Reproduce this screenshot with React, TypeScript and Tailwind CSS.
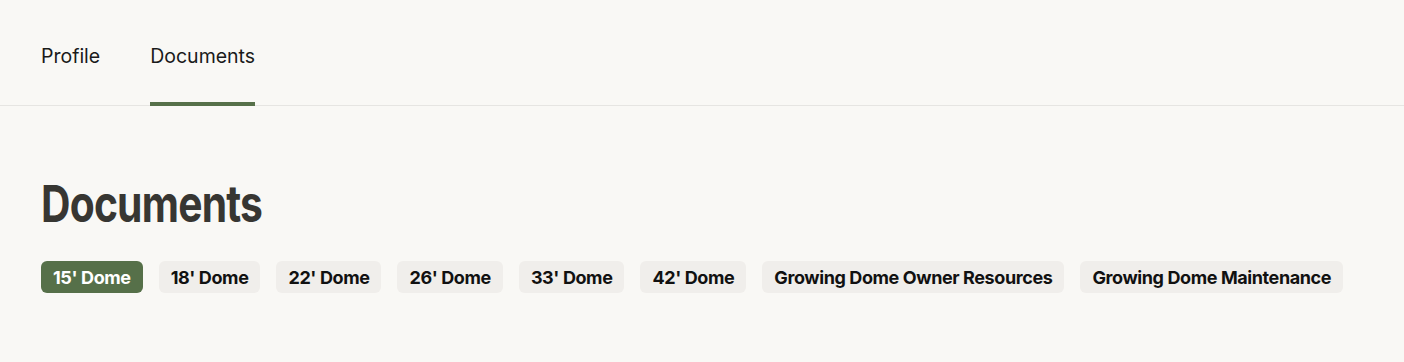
import React, { useState } from 'react';

const TABS = ['Profile', 'Documents'];
const DOMES = [
  "15' Dome",
  "18' Dome",
  "22' Dome",
  "26' Dome",
  "33' Dome",
  "42' Dome",
  'Growing Dome Owner Resources',
  'Growing Dome Maintenance',
];

export default function App() {
  const [tab, setTab] = useState('Documents');
  const [dome, setDome] = useState(DOMES[0]);

  return (
    <div className="min-h-[362px] bg-[#f9f8f5] text-[#1a1a1a] font-['Inter',sans-serif]">
      {/* Tabs */}
      <div className="flex gap-[50px] px-[41px] border-b border-[#e6e5e2]">
        {TABS.map(t => {
          const active = t === tab;
          return (
            <button
              key={t}
              onClick={() => setTab(t)}
              className={`pt-[42px] pb-[32px] text-[19.5px] leading-[28px] border-b-4 -mb-px ${
                active ? 'border-[#567049]' : 'border-transparent'
              }`}
            >
              {t}
            </button>
          );
        })}
      </div>

      {/* Content */}
      <div className="px-[41px] pt-[68px]">
        <h1 className="inline-block origin-left scale-x-[0.8] font-bold text-[51px] leading-[60px] text-[#373632] tracking-[-1px]">
          Documents
        </h1>
        <div className="flex gap-4 mt-[27px]">
          {DOMES.map(d => {
            const active = d === dome;
            return (
              <button
                key={d}
                onClick={() => setDome(d)}
                className={`h-8 px-3 rounded-md whitespace-nowrap font-bold text-[18px] tracking-[-0.4px] ${
                  active ? 'bg-[#567049] text-white' : 'bg-[#f0eeeb] text-[#111]'
                }`}
              >
                {d}
              </button>
            );
          })}
        </div>
      </div>
    </div>
  );
}
